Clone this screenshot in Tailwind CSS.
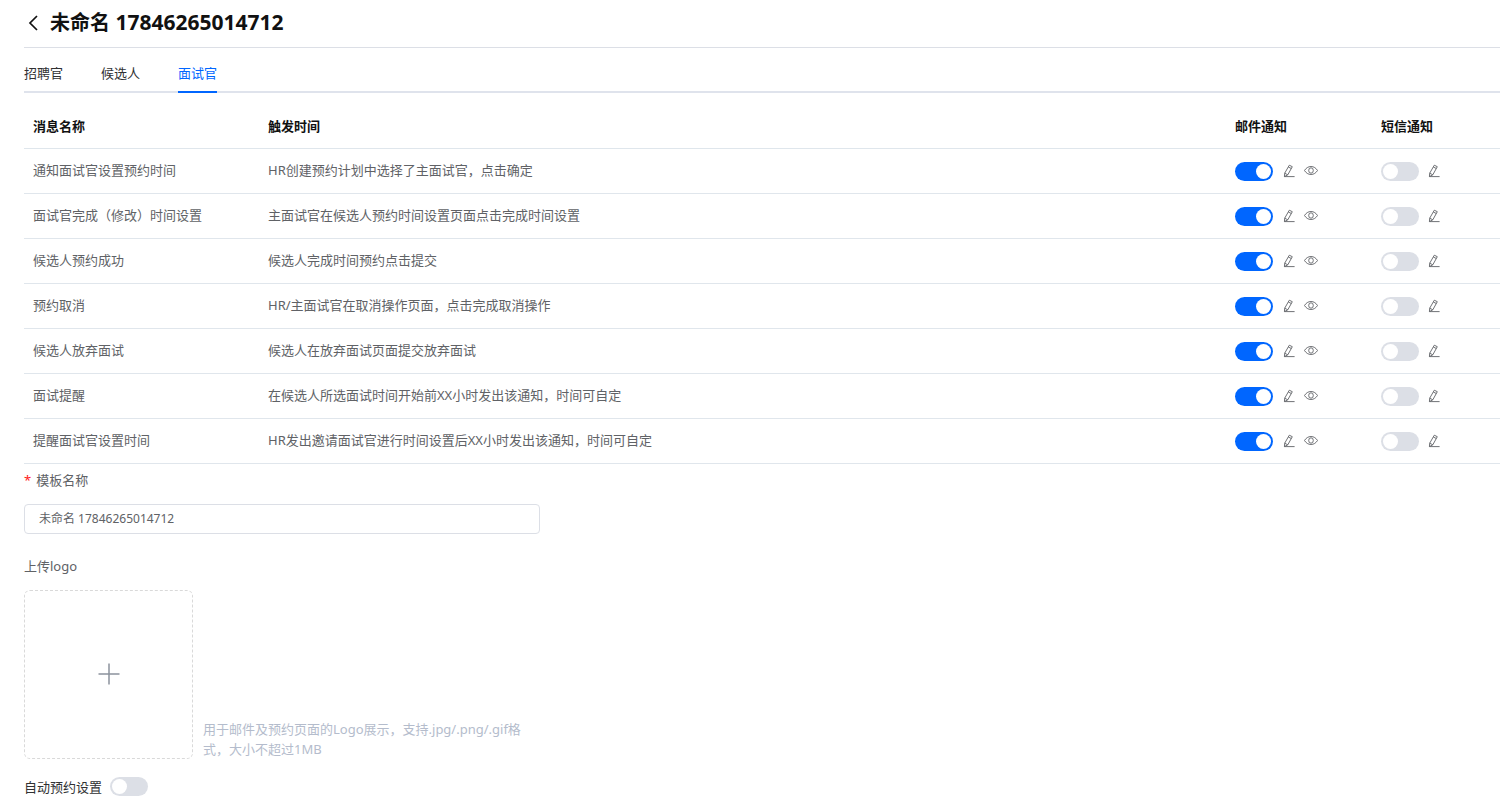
<!DOCTYPE html>
<html lang="zh-CN">
<head>
<meta charset="utf-8">
<title>未命名 17846265014712</title>
<script src="https://cdn.jsdelivr.net/npm/@tailwindcss/browser@4"></script>
</head>
<body class="bg-white pl-6 font-['Noto_Sans','Noto_Sans_CJK_SC',sans-serif] text-[13px] leading-5 text-[#606266]">
<svg class="hidden" aria-hidden="true">
  <symbol id="edit" viewBox="0 0 12 14">
    <path d="M6.300 1.200 9.300 2.700 4.800 10.800 1.400 12.600 1.700 9.200Z M5.300 3 8.300 4.500 M1.700 9.200 4.800 10.800 M1.400 12.600H11.600" fill="none" stroke="currentColor" stroke-width="0.9" stroke-linejoin="round"/>
  </symbol>
  <symbol id="eye" viewBox="0 0 14 14">
    <path d="M.5 6.500C2 4 4.300 2.500 7 2.500s5 1.500 6.500 4c-1.500 2.500-3.800 4-6.500 4s-5-1.500-6.500-4Z" fill="none" stroke="currentColor" stroke-width="0.9"/>
    <ellipse cx="7" cy="6.500" rx="2.300" ry="2.700" fill="none" stroke="currentColor" stroke-width="0.9"/>
  </symbol>
</svg>

<header class="flex h-12 items-center gap-2 border-b border-[#dcdfe6] pb-0.5 text-[#111]">
  <button type="button" aria-label="返回" class="flex w-[18px] justify-center">
    <svg class="h-4 w-4" viewBox="0 0 16 16" fill="none" stroke="currentColor" stroke-width="1.700"><path d="M12 1 5 8l7 7"/></svg>
  </button>
  <h1 class="text-[21px] leading-7 font-bold"><span class="text-[20px]">未命名</span> 17846265014712</h1>
</header>

<nav class="mt-1.5 flex h-[39px] gap-[38px] border-b-2 border-[#dfe3ec] text-[#303133]" role="tablist">
  <button type="button" role="tab" class="h-[39px] border-b-2 border-transparent">招聘官</button>
  <button type="button" role="tab" class="h-[39px] border-b-2 border-transparent">候选人</button>
  <button type="button" role="tab" aria-selected="true" class="h-[39px] border-b-2 border-[#0066ff] text-[#0066ff]">面试官</button>
</nav>

<main>
<table class="mt-3 w-full table-fixed border-collapse text-left">
  <colgroup><col class="w-[234px]"><col><col class="w-[146px]"><col class="w-[129px]"></colgroup>
  <thead class="text-[#111]">
    <tr class="h-[43px] border-b border-[#dfe6ec]">
      <th class="pl-[9px] font-bold">消息名称</th><th class="pl-2.5 font-bold">触发时间</th><th class="pl-2.5 font-bold">邮件通知</th><th class="pl-2.5 font-bold">短信通知</th>
    </tr>
  </thead>
  <tbody id="rows"></tbody>
</table>

<form>
  <label for="name" class="mt-1.5 flex gap-[5px]"><span class="text-[#ff2020]">*</span>模板名称</label>
  <input id="name" type="text" value="未命名 17846265014712" class="mt-3.5 block h-[30px] w-full max-w-[516px] rounded border border-[#dcdfe6] px-3.5 pb-0.5 text-xs">
  <p class="mt-[22px]">上传logo</p>
  <div class="mt-3.5 flex items-end gap-2.5">
    <button type="button" aria-label="上传logo" class="flex h-[169px] w-[169px] shrink-0 items-center justify-center rounded-md border border-dashed border-[#d9d9d9] text-[#8c939d]">
      <svg class="h-[22px] w-[22px]" viewBox="0 0 22 22" fill="none" stroke="currentColor" stroke-width="1.500"><path d="M11 .5v21M.5 11h21"/></svg>
    </button>
    <p class="max-w-[328px] text-[#b4bccc]">用于邮件及预约页面的Logo展示，支持.jpg/.png/.gif格式，大小不超过1MB</p>
  </div>
  <div class="mt-[18px] flex items-center gap-2 text-[#303133]">
    <label for="auto">自动预约设置</label>
    <input id="auto" type="checkbox" role="switch" class="h-[19px] w-[38px] appearance-none rounded-full bg-[#dcdfe6] p-0.5 before:block before:h-[15px] before:w-[15px] before:rounded-full before:bg-white checked:bg-[#0066ff] checked:before:ml-auto">
  </div>
</form>
</main>

<template id="row">
  <tr class="h-[45px] border-b border-[#e0e6ec]">
    <td class="pb-0.5 pl-[9px]"></td>
    <td class="pb-0.5 pl-2.5"></td>
    <td class="pt-0.5 pl-2.5"><div class="flex items-center">
      <input type="checkbox" role="switch" checked aria-label="邮件通知" class="h-[19px] w-[38px] appearance-none rounded-full bg-[#dcdfe6] p-0.5 before:block before:h-[15px] before:w-[15px] before:rounded-full before:bg-white checked:bg-[#0066ff] checked:before:ml-auto">
      <button type="button" aria-label="编辑邮件" class="ml-2.5 pb-0.5"><svg class="h-3.5 w-3"><use href="#edit"/></svg></button>
      <button type="button" aria-label="预览邮件" class="ml-[9px] pb-0.5"><svg class="h-3.5 w-3.5"><use href="#eye"/></svg></button>
    </div></td>
    <td class="pt-0.5 pl-2.5"><div class="flex items-center">
      <input type="checkbox" role="switch" aria-label="短信通知" class="h-[19px] w-[38px] appearance-none rounded-full bg-[#dcdfe6] p-0.5 before:block before:h-[15px] before:w-[15px] before:rounded-full before:bg-white checked:bg-[#0066ff] checked:before:ml-auto">
      <button type="button" aria-label="编辑短信" class="ml-[9px] pb-0.5"><svg class="h-3.5 w-3"><use href="#edit"/></svg></button>
    </div></td>
  </tr>
</template>
<script>
  const notices = [
    ["通知面试官设置预约时间", "HR创建预约计划中选择了主面试官，点击确定"],
    ["面试官完成（修改）时间设置", "主面试官在候选人预约时间设置页面点击完成时间设置"],
    ["候选人预约成功", "候选人完成时间预约点击提交"],
    ["预约取消", "HR/主面试官在取消操作页面，点击完成取消操作"],
    ["候选人放弃面试", "候选人在放弃面试页面提交放弃面试"],
    ["面试提醒", "在候选人所选面试时间开始前XX小时发出该通知，时间可自定"],
    ["提醒面试官设置时间", "HR发出邀请面试官进行时间设置后XX小时发出该通知，时间可自定"]
  ];
  const template = document.getElementById("row");
  for (const [name, trigger] of notices) {
    const row = template.content.cloneNode(true);
    const cells = row.querySelectorAll("td");
    cells[0].textContent = name;
    cells[1].textContent = trigger;
    document.getElementById("rows").append(row);
  }
</script>
</body>
</html>
